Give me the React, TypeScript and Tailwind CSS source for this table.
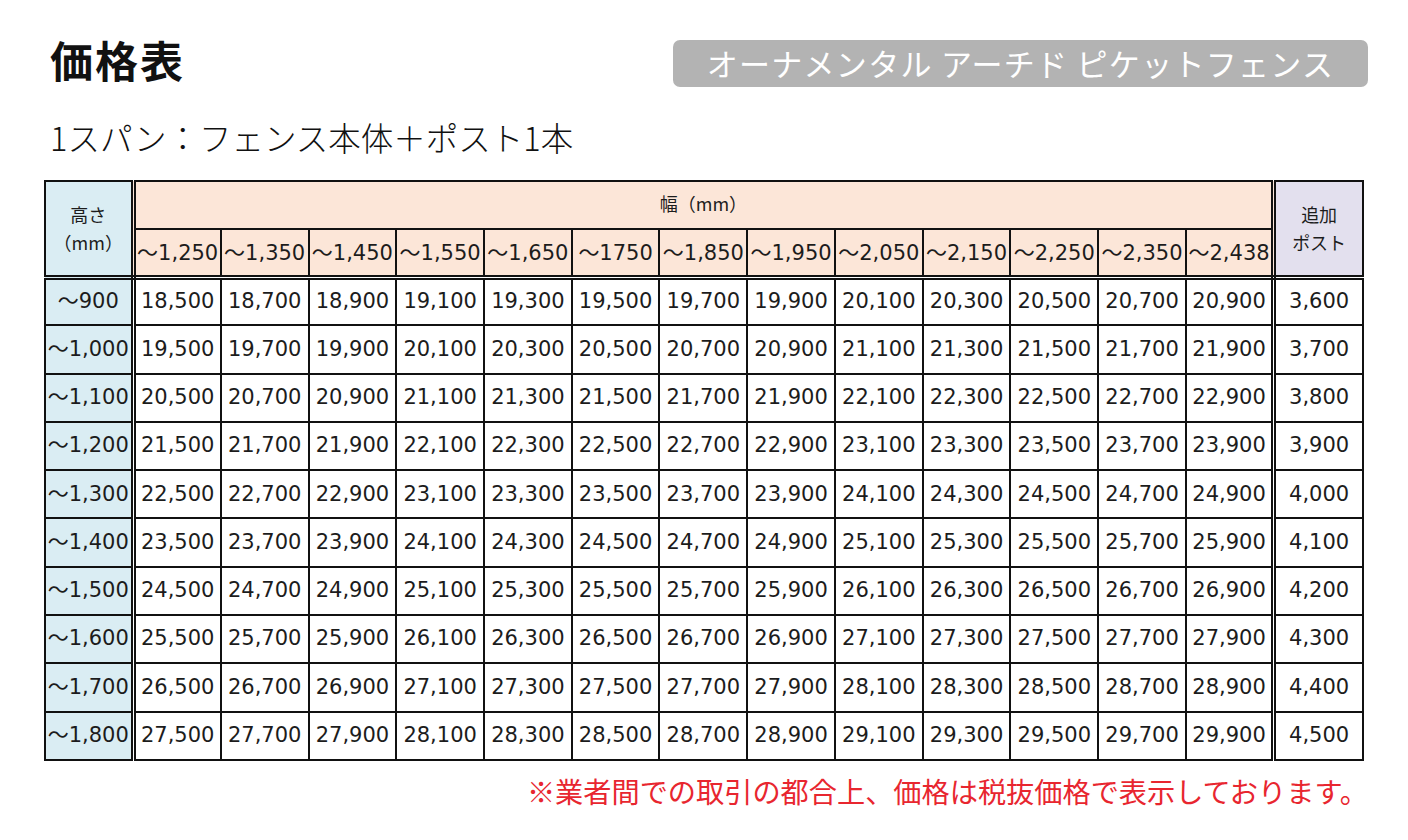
import React from "react";

const jp = "[font-family:'Noto_Sans_CJK_JP','Noto_Sans',sans-serif]";
const num = "[font-family:'DejaVu_Sans','Noto_Sans_CJK_JP',sans-serif]";

const widths = [
  "～1,250", "～1,350", "～1,450", "～1,550", "～1,650", "～1750", "～1,850",
  "～1,950", "～2,050", "～2,150", "～2,250", "～2,350", "～2,438",
];

const heights = [
  "～900", "～1,000", "～1,100", "～1,200", "～1,300",
  "～1,400", "～1,500", "～1,600", "～1,700", "～1,800",
];

const fmt = (n: number) => n.toLocaleString("en-US");

export default function App() {
  return (
    <div className="min-h-[840px] w-[1408px] bg-white text-[#111]">
      <div className="ml-[44px] w-[1324px] pt-[40px]">
        {/* Header */}
        <div className="flex h-[47px] items-start justify-between">
          <h1 className={`${jp} -mt-[4px] pl-[6px] text-[43px] font-bold leading-[47px] tracking-[2px]`}>
            価格表
          </h1>
          <div
            className={`${jp} flex h-[47px] w-[695px] items-center justify-center rounded-[7px] bg-[#b3b3b3] text-[31px] tracking-[1.3px] text-white`}
          >
            オーナメンタル アーチド ピケットフェンス
          </div>
        </div>

        <p className={`${jp} mt-[32px] pl-[6px] text-[32.5px] font-light leading-[36px]`}>
          1スパン：フェンス本体＋ポスト1本
        </p>

        {/* Price table */}
        <table className={`${num} mt-[25px] w-[1320px] table-fixed border-collapse text-[21px] text-[#1c1c1c]`}>
          <colgroup>
            <col className="w-[88px]" />
            {widths.map((w) => (
              <col key={w} className="w-[87.7px]" />
            ))}
            <col className="w-[89px]" />
          </colgroup>
          <thead>
            <tr className="h-[48px]">
              <th
                rowSpan={2}
                className={`${jp} border-2 border-[#111] border-r-[5px] border-b-[5px] bg-[#daedf3] text-[18px] font-normal leading-[28px] [border-bottom-style:double] [border-right-style:double]`}
              >
                高さ
                <br />
                （mm）
              </th>
              <th
                colSpan={13}
                className={`${jp} border-2 border-[#111] bg-[#fce6d8] pb-[4px] text-[18px] font-normal`}
              >
                幅（mm）
              </th>
              <th
                rowSpan={2}
                className={`${jp} border-2 border-[#111] border-b-[5px] border-l-[5px] bg-[#e3e0ee] text-[18px] font-normal leading-[28px] [border-bottom-style:double] [border-left-style:double]`}
              >
                追加
                <br />
                ポスト
              </th>
            </tr>
            <tr className="h-[48px]">
              {widths.map((w) => (
                <th
                  key={w}
                  className="whitespace-nowrap border-2 border-b-[5px] border-[#111] bg-[#fce6d8] px-0 pt-[2px] font-normal [border-bottom-style:double]"
                >
                  {w}
                </th>
              ))}
            </tr>
          </thead>
          <tbody>
            {heights.map((h, i) => (
              <tr key={h} className="h-[48.3px]">
                <td className="whitespace-nowrap border-2 border-r-[5px] border-[#111] bg-[#daedf3] px-0 text-center [border-right-style:double]">
                  {h}
                </td>
                {widths.map((w, j) => (
                  <td key={w} className="whitespace-nowrap border-2 border-[#111] px-0 text-center">
                    {fmt(18500 + i * 1000 + j * 200)}
                  </td>
                ))}
                <td className="border-2 border-l-[5px] border-[#111] text-center [border-left-style:double]">
                  {fmt(3600 + i * 100)}
                </td>
              </tr>
            ))}
          </tbody>
        </table>

        <p className={`${jp} mt-[12px] w-[1324px] text-right text-[28.2px] leading-[36px] text-[#e8262f]`}>
          ※業者間での取引の都合上、価格は税抜価格で表示しております。
        </p>
      </div>
    </div>
  );
}
